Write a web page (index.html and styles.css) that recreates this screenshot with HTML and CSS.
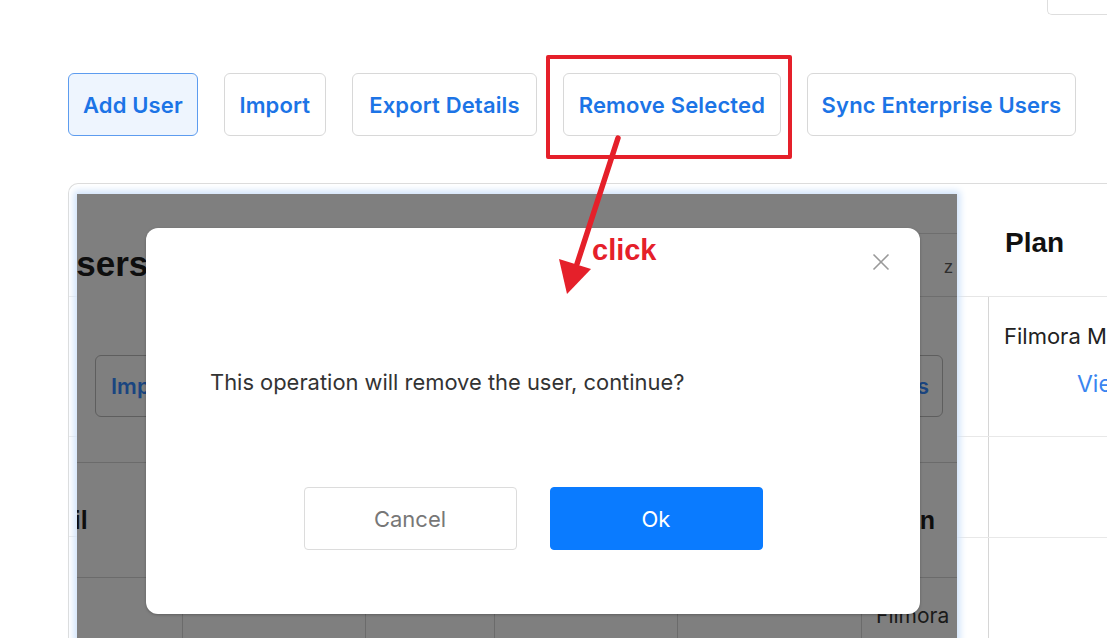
FILE: index.html
```html
<!DOCTYPE html>
<html lang="en">
<head>
<meta charset="utf-8">
<title>Users</title>
<link rel="stylesheet" href="styles.css">
</head>
<body>
<div class="page">
  <div class="topbar"><div class="topbox"></div></div>

  <div class="actions">
    <button class="btn btn-primary">Add User</button>
    <button class="btn btn-import">Import</button>
    <button class="btn btn-export">Export Details</button>
    <button class="btn btn-remove">Remove Selected</button>
    <button class="btn">Sync Enterprise Users</button>
  </div>

  <div class="card">
    <div class="strip">
      <div class="strip-row r1"></div>
      <div class="strip-row r2"></div>
      <div class="strip-row r3"></div>
    </div>

    <div class="shot">
      <div class="s-head">
        <div class="s-title">Users</div>
        <div class="s-search">z</div>
      </div>
      <div class="s-actions">
        <span class="s-btn">Import</span>
        <span class="s-btn">Sync Enterprise Users</span>
      </div>
      <div class="s-row1">
        <span class="s-email">Email</span>
        <span class="s-plan">Plan</span>
      </div>
      <div class="s-row2">
        <div class="s-cell"></div>
        <div class="s-cell"></div>
        <div class="s-cell"></div>
        <div class="s-cell"></div>
        <div class="s-cell"></div>
        <div class="s-cell s-last">Filmora</div>
      </div>
    </div>

    <div class="rc">
      <div class="rc-head">Plan</div>
      <div class="rc-row rc-row1">
        <div class="rc-gap"></div>
        <div class="rc-cell">
          <div class="rc-plan">Filmora Max</div>
          <div class="rc-link">View</div>
        </div>
      </div>
      <div class="rc-row rc-row2">
        <div class="rc-gap"></div>
        <div class="rc-cell"></div>
      </div>
      <div class="rc-row rc-row3">
        <div class="rc-gap"></div>
        <div class="rc-cell"></div>
      </div>
    </div>
  </div>

  <div class="modal">
    <button class="modal-close" aria-label="Close">
      <svg width="18" height="18" viewBox="0 0 18 18"><path d="M1.5 1.5 L16.5 16.5 M16.5 1.5 L1.5 16.5" stroke="#9a9a9a" stroke-width="1.6" fill="none"/></svg>
    </button>
    <div class="modal-body">This operation will remove the user, continue?</div>
    <div class="modal-foot">
      <button class="m-btn m-cancel">Cancel</button>
      <button class="m-btn m-ok">Ok</button>
    </div>
  </div>

  <div class="mark-box"></div>
  <svg class="mark-arrow" width="140" height="180" viewBox="0 0 140 180">
    <path d="M78 8 L37 134" stroke="#e5202a" stroke-width="5.5" stroke-linecap="round" fill="none"/>
    <path d="M27 164 L19 129 L51 139 Z" fill="#e5202a"/>
  </svg>
  <div class="mark-text">click</div>
</div>
</body>
</html>
```

FILE: styles.css
```css
* { box-sizing: border-box; }

html, body {
  margin: 0;
  padding: 0;
  background: #ffffff;
}

body {
  width: 1107px;
  height: 638px;
  overflow: hidden;
  font-family: Inter, "Noto Sans", "Liberation Sans", sans-serif;
}

.page {
  position: relative;
  width: 1107px;
  height: 638px;
  overflow: hidden;
}

/* top-right fragment */
.topbar {
  display: flex;
  justify-content: flex-end;
  height: 15px;
}
.topbox {
  width: 60px;
  height: 15px;
  border: 1px solid #dedede;
  border-top: none;
  border-right: none;
  border-radius: 0 0 0 5px;
}

/* action buttons */
.actions {
  display: flex;
  gap: 26px;
  margin: 58px 0 0 68px;
}
.btn {
  height: 63px;
  padding: 0 14px;
  border: 1px solid #d8d8d8;
  border-radius: 6px;
  background: #ffffff;
  color: #1c74e6;
  font-family: Inter, "Noto Sans", sans-serif;
  font-weight: 600;
  font-size: 22px;
  letter-spacing: 0.15px;
  white-space: nowrap;
  cursor: pointer;
}
.btn-primary {
  background: #eef5fe;
  border-color: #5d9cef;
}
.btn-import { padding: 0 14.5px; }
.btn-export { padding: 0 16.5px; }
.btn-remove { padding: 0 14.5px; }

/* card */
.card {
  display: grid;
  grid-template-columns: 8px 880px 1fr;
  margin: 47px 0 0 68px;
  height: 460px;
  border-top: 1px solid #dcdcdc;
  border-left: 1px solid #dcdcdc;
  border-radius: 10px 0 0 0;
}

.strip-row {
  border-bottom: 1px solid #ececec;
}
.strip-row.r1 { height: 113px; }
.strip-row.r2 { height: 140px; }
.strip-row.r3 { height: 100px; }

/* embedded screenshot (dimmed) */
.shot {
  position: relative;
  margin-top: 10px;
  height: 450px;
  background: #7f7f7f;
  box-shadow: 0 0 7px 3px #cfe2fa;
  overflow: hidden;
  z-index: 1;
  font-family: "Liberation Sans", Arial, sans-serif;
}
.s-head {
  display: flex;
  justify-content: space-between;
  height: 103px;
}
.s-title {
  margin: 50px 0 0 -26px;
  font-weight: 700;
  font-size: 35px;
  line-height: 40px;
  color: #0e0e0e;
}
.s-search {
  align-self: flex-end;
  width: 220px;
  height: 64px;
  border-top: 1px solid #6e6e6e;
  border-bottom: 1px solid #6e6e6e;
  padding-right: 4px;
  text-align: right;
  font-size: 18px;
  line-height: 66px;
  color: #2e2e2e;
}
.s-actions {
  display: flex;
  justify-content: space-between;
  align-items: center;
  height: 166px;
  padding: 12px 14px 0 18px;
  border-bottom: 1px solid #6b6b6b;
}
.s-btn {
  display: flex;
  align-items: center;
  height: 62px;
  padding: 0 13px 0 15px;
  border: 1px solid #5e5e5e;
  border-radius: 6px;
  font-family: Inter, "Noto Sans", sans-serif;
  font-weight: 600;
  font-size: 22px;
  color: #1a4580;
  white-space: nowrap;
}
.s-row1 {
  display: flex;
  justify-content: space-between;
  align-items: center;
  height: 115px;
  border-bottom: 1px solid #6b6b6b;
  font-weight: 700;
  font-size: 25px;
  color: #0e0e0e;
}
.s-email { margin-left: -56px; }
.s-plan { margin-right: 22px; }

.s-row2 {
  display: grid;
  grid-template-columns: 105px 183px 129px 183px 184px 96px;
  height: 70px;
}
.s-cell + .s-cell {
  border-left: 1px solid #6b6b6b;
}
.s-last {
  padding: 24px 0 0 14px;
  font-family: Inter, "Noto Sans", sans-serif;
  font-size: 21px;
  line-height: 28px;
  color: #1a1a1a;
  white-space: nowrap;
}

/* right column of the page table */
.rc {
  font-family: Inter, "Noto Sans", sans-serif;
}
.rc-head {
  display: flex;
  align-items: center;
  height: 113px;
  padding: 6px 0 0 48px;
  border-bottom: 1px solid #e6e6e6;
  font-family: "Liberation Sans", Arial, sans-serif;
  font-weight: 700;
  font-size: 28px;
  color: #111111;
}
.rc-row {
  display: flex;
  border-bottom: 1px solid #e8e8e8;
}
.rc-row1 { height: 140px; }
.rc-row2 { height: 101px; }
.rc-row3 { height: 110px; }
.rc-gap { width: 31px; }
.rc-cell {
  flex: 1;
  border-left: 1px solid #d6d6d6;
  overflow: hidden;
}
.rc-plan {
  padding: 25px 0 0 15px;
  font-size: 22px;
  line-height: 28px;
  color: #222222;
  white-space: nowrap;
}
.rc-link {
  margin: 20px 0 0 88px;
  font-size: 23px;
  line-height: 28px;
  color: #3a85f0;
  white-space: nowrap;
}

/* modal */
.modal {
  position: absolute;
  left: 146px;
  top: 228px;
  width: 774px;
  height: 386px;
  background: #ffffff;
  border-radius: 12px;
  box-shadow: 0 1px 3px rgba(0, 0, 0, 0.25);
  z-index: 5;
}
.modal-close {
  position: absolute;
  top: 25px;
  right: 30px;
  width: 18px;
  height: 18px;
  padding: 0;
  border: none;
  background: none;
  display: flex;
}
.modal-body {
  padding: 140px 0 0 64px;
  font-family: Inter, "Noto Sans", sans-serif;
  font-size: 21.9px;
  line-height: 28px;
  color: #333333;
  white-space: nowrap;
}
.modal-foot {
  display: flex;
  justify-content: center;
  gap: 33px;
  margin-top: 91px;
}
.m-btn {
  width: 213px;
  height: 63px;
  border-radius: 4px;
  font-family: Inter, "Noto Sans", sans-serif;
  font-size: 22px;
}
.m-cancel {
  background: #ffffff;
  border: 1px solid #dcdcdc;
  color: #777777;
}
.m-ok {
  background: #0a7bff;
  border: 1px solid #0a7bff;
  color: #ffffff;
}

/* red annotation */
.mark-box {
  position: absolute;
  left: 546px;
  top: 55px;
  width: 246px;
  height: 104px;
  border: 4px solid #e5202a;
  border-radius: 2px;
  z-index: 6;
}
.mark-arrow {
  position: absolute;
  left: 540px;
  top: 130px;
  z-index: 6;
}
.mark-text {
  position: absolute;
  left: 592px;
  top: 236px;
  font-family: "Liberation Sans", Arial, sans-serif;
  font-weight: 700;
  font-size: 29px;
  line-height: 28px;
  color: #e5202a;
  z-index: 6;
}
```
